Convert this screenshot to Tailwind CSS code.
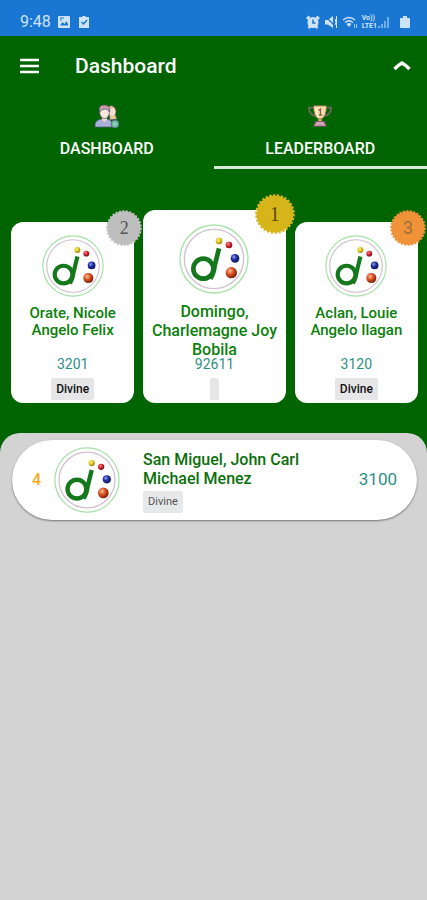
<!DOCTYPE html>
<html lang="en">
<head>
<meta charset="utf-8">
<meta name="viewport" content="width=device-width, initial-scale=1">
<title>Dashboard</title>
<script src="https://cdn.jsdelivr.net/npm/@tailwindcss/browser@4"></script>
</head>
<body class="flex min-h-screen flex-col bg-[#006400] font-['Roboto','Liberation_Sans',sans-serif]">
<svg class="absolute size-0" aria-hidden="true">
  <defs>
    <radialGradient id="gy" cx=".38" cy=".35" r=".7"><stop offset="0" stop-color="#fff27a"/><stop offset=".5" stop-color="#dcc51c"/><stop offset="1" stop-color="#8f7c10"/></radialGradient>
    <radialGradient id="gr" cx=".38" cy=".35" r=".7"><stop offset="0" stop-color="#ff8a8a"/><stop offset=".5" stop-color="#cf1f30"/><stop offset="1" stop-color="#7a0c18"/></radialGradient>
    <radialGradient id="gb" cx=".38" cy=".35" r=".7"><stop offset="0" stop-color="#98a4f0"/><stop offset=".45" stop-color="#1f2fa0"/><stop offset="1" stop-color="#0a1258"/></radialGradient>
    <radialGradient id="go" cx=".38" cy=".35" r=".7"><stop offset="0" stop-color="#ffc09a"/><stop offset=".45" stop-color="#d9501f"/><stop offset="1" stop-color="#6e1c08"/></radialGradient>
    <symbol id="logo" viewBox="0 0 210 210">
      <circle cx="105" cy="105" r="102" fill="#fff" stroke="#a6e2a6" stroke-width="4"/>
      <circle cx="105" cy="105" r="89" fill="none" stroke="#cdc2cd" stroke-width="4"/>
      <circle cx="73" cy="134" r="30" fill="none" stroke="#15781c" stroke-width="14"/>
      <path d="M120 73 107 126Q104 150 94 164" fill="none" stroke="#15781c" stroke-width="14"/>
      <circle cx="120" cy="51" r="10" fill="url(#gy)"/>
      <circle cx="150" cy="63" r="10" fill="url(#gr)"/>
      <circle cx="168" cy="103" r="13" fill="url(#gb)"/>
      <circle cx="157" cy="146" r="17" fill="url(#go)"/>
    </symbol>
    <symbol id="seal" viewBox="0 0 40 40">
      <circle cx="20" cy="20" r="18.500" fill="currentColor"/>
      <circle cx="20" cy="20" r="18.500" fill="none" stroke="currentColor" stroke-width="2.600" pathLength="60" stroke-dasharray="1.200 .8"/>
    </symbol>
  </defs>
</svg>

<div class="flex h-9 items-center justify-between bg-[#1976d2] pt-2 pr-4 pl-5 text-[#cfe4fb]">
  <div class="flex items-center gap-[6px]">
    <span class="text-base">9:48</span>
    <svg class="size-[14px]" viewBox="0 0 14 14"><rect x="1" y="1" width="12" height="12" rx="1" fill="currentColor"/><path d="M3 10.500 5.500 7l2 2L9.500 6l2 4.500z" fill="#1976d2"/><path d="M3 3h4M3 5h2" stroke="#1976d2"/></svg>
    <svg class="size-[14px]" viewBox="0 0 14 14"><path d="M2 2h3l1-1h2l1 1h3v11H2z" fill="currentColor"/><path d="m4.500 7 2 2 3.500-4" fill="none" stroke="#1976d2" stroke-width="1.500"/></svg>
  </div>
  <div class="flex items-center gap-1">
    <svg class="size-[14px]" viewBox="0 0 14 14"><circle cx="7" cy="7.500" r="5.500" fill="currentColor"/><path d="M1 4 3.500 1.500M13 4 10.500 1.500M2.500 13l1.500-1.500M11.500 13 10 11.500" stroke="currentColor" stroke-width="2.500"/><path d="M7 4.500V8h2.500" fill="none" stroke="#1976d2" stroke-width="1.500"/></svg>
    <svg class="size-[14px]" viewBox="0 0 14 14"><path d="M1 5h3l5-4v12L4 9.500H1z" fill="currentColor"/><path d="m1 1 12 12" stroke="#1976d2" stroke-width="1.200"/><path d="M11 4q2 3 0 6M12.500 1v12" fill="none" stroke="currentColor"/></svg>
    <svg class="h-[14px] w-4" viewBox="0 0 16 14"><path d="M1 5q6-5 12 0M3 7.500q4-3.500 8 0" fill="none" stroke="currentColor" stroke-width="1.500"/><path d="M4.500 9Q7 7 9.500 9L7 12z" fill="currentColor"/><path d="M12.500 9v4M14.500 9v4" stroke="currentColor" opacity=".7"/></svg>
    <span class="flex flex-col text-[7px] leading-[8px] font-bold"><span>Vo))</span><span>LTE1</span></span>
    <svg class="-ml-1 size-[14px]" viewBox="0 0 14 14"><path d="M2 11v2M5 9v4M8 6v7M11 2v11" stroke="currentColor" stroke-width="1.500" opacity=".65"/></svg>
    <svg class="ml-1 h-[14px] w-3" viewBox="0 0 12 14"><path d="M1 4q0-1 1-1h2V1h4v2h2q1 0 1 1v8q0 1-1 1H2q-1 0-1-1z" fill="currentColor"/></svg>
  </div>
</div>

<header class="flex h-[60px] items-center pr-4 pl-[19px] text-white">
  <button type="button" aria-label="Open menu"><svg class="h-4 w-[21px]" viewBox="0 0 21 16"><path d="M1 2h19M1 8h19M1 14h19" stroke="currentColor" stroke-width="2.500"/></svg></button>
  <h1 class="ml-[35px] flex-1 text-[21px] leading-7 font-medium">Dashboard</h1>
  <button type="button" aria-label="Collapse"><svg class="h-3 w-[18px]" viewBox="0 0 18 12"><path d="M1.500 9Q6 4.500 9 3q3 1.500 7.500 6" fill="none" stroke="currentColor" stroke-width="3.500"/></svg></button>
</header>

<nav class="grid h-[73px] grid-cols-2 text-base font-medium text-white">
  <a href="#dashboard" class="flex flex-col items-center gap-[9px] border-b-3 border-transparent pt-2">
    <svg class="size-6" viewBox="0 0 24 24" stroke="#565a82" stroke-width=".8"><path d="M13 3q4-3 7 1 2 3 0 6l2 5-7 1z" fill="#e8c98e"/><circle cx="17" cy="8" r="3.500" fill="#f6dccb" stroke="none"/><path d="M0 23q-1-7 7-8h5q6 1 6 8z" fill="#a9b0dc"/><path d="M7 12h5v4l-2.500 2L7 16z" fill="#f3d5c5" stroke="none"/><ellipse cx="9.500" cy="8.500" rx="4.800" ry="6" fill="#fbe6dc"/><path d="M4.500 8Q3 1 9 1q7 0 5.500 7-1-3-4-3-4 0-6 3z" fill="#cd9ba4"/><circle cx="20" cy="20" r="4" fill="#6abf9f"/><path d="M20 18v4M18 20h4" stroke="#a8dcc5"/></svg>
    <span>DASHBOARD</span>
  </a>
  <a href="#leaderboard" aria-current="page" class="flex flex-col items-center gap-[9px] border-b-3 border-[#d9e8d6] pt-2">
    <svg class="size-6" viewBox="0 0 26 24"><path d="M7 3H1q0 8 8 9M19 3h6q0 8-8 9" fill="none" stroke="#6a6a5c" stroke-width="2"/><path d="M6 1h14q0 11-5 14h-4Q6 12 6 1z" fill="#fbdca8" stroke="#7a6448" stroke-width=".8"/><path d="M9 3q0 7 3 10" stroke="#fff1d3" stroke-width="1.500" fill="none"/><path d="M11.500 15h3l1 4h-5z" fill="#d9a76c"/><path d="M8 18h10v2.500h1.500V23h-13v-2.500H8z" fill="#d5a0b5" stroke="#6d4d63" stroke-width=".8"/><path d="m11.500 6 2-1.500V11M11.500 11h4" fill="none" stroke="#805d50" stroke-width="1.400"/></svg>
    <span>LEADERBOARD</span>
  </a>
</nav>

<main class="flex flex-1 flex-col">
  <section aria-label="Top three" class="grid grid-cols-[123fr_142fr_123fr] items-end gap-[9px] pt-[41px] pr-[9px] pb-[30px] pl-[11px] text-center text-sm text-[#2f8f86]">
    <article class="relative flex h-[181px] flex-col items-center rounded-xl bg-white pt-[13px]">
      <div class="absolute -top-3 -right-2 flex size-9 items-center justify-center text-[#bebebe]"><svg class="absolute inset-0 size-full"><use href="#seal"/></svg><span class="relative font-['Liberation_Serif',serif] text-lg text-[#555]">2</span></div>
      <svg class="size-[62px]" role="img" aria-label="Logo"><use href="#logo"/></svg>
      <h2 class="mt-2 h-[49px] px-3 text-[15px] leading-[17px] font-medium text-[#0b800b]">Orate, Nicole Angelo Felix</h2>
      <p class="leading-5">3201</p>
      <p class="mt-1 rounded-xs bg-[#e6e6e8] px-[5px] text-xs leading-[22px] font-medium text-[#111]">Divine</p>
    </article>
    <article class="relative flex h-[193px] flex-col items-center rounded-xl bg-white pt-[14px]">
      <div class="absolute -top-4 -right-[9px] flex size-10 items-center justify-center text-[#d6b51a]"><svg class="absolute inset-0 size-full"><use href="#seal"/></svg><span class="relative font-['Liberation_Serif',serif] text-xl text-[#5a4a10]">1</span></div>
      <svg class="size-[70px]" role="img" aria-label="Logo"><use href="#logo"/></svg>
      <h2 class="mt-2 h-[54px] px-1 text-base leading-[19px] font-medium text-[#0b800b]">Domingo, Charlemagne Joy Bobila</h2>
      <p class="leading-4">92611</p>
      <p class="mt-[6px] rounded-xs bg-[#e6e6e8] px-[3px] text-xs leading-[22px]">&nbsp;</p>
    </article>
    <article class="relative flex h-[181px] flex-col items-center rounded-xl bg-white pt-[13px]">
      <div class="absolute -top-3 -right-2 flex size-9 items-center justify-center text-[#f09238]"><svg class="absolute inset-0 size-full"><use href="#seal"/></svg><span class="relative text-lg text-[#a0703c]">3</span></div>
      <svg class="size-[62px]" role="img" aria-label="Logo"><use href="#logo"/></svg>
      <h2 class="mt-2 h-[49px] px-3 text-[15px] leading-[17px] font-medium text-[#0b800b]">Aclan, Louie Angelo Ilagan</h2>
      <p class="leading-5">3120</p>
      <p class="mt-1 rounded-xs bg-[#e6e6e8] px-[5px] text-xs leading-[22px] font-medium text-[#111]">Divine</p>
    </article>
  </section>

  <section aria-label="Other ranks" class="flex-1 rounded-t-[20px] bg-[#d3d3d3] pt-[7px] pr-[10px] pl-3">
    <article class="flex h-20 items-center rounded-full bg-white pr-5 pl-5 shadow-[0_1px_2px_rgba(0,0,0,0.45)]">
      <span class="w-[22px] text-base font-medium text-[#f9a825]">4</span>
      <svg class="size-[66px]" role="img" aria-label="Logo"><use href="#logo"/></svg>
      <div class="ml-[23px] flex-1 pt-[2px]">
        <h2 class="max-w-[170px] text-base leading-[19px] font-medium text-[#0b700b]">San Miguel, John Carl Michael Menez</h2>
        <p class="mt-[3px] w-fit rounded-xs bg-[#e6e8ea] px-[5px] text-[11px] leading-[22px] text-[#555]">Divine</p>
      </div>
      <span class="text-[17px] text-[#2f8f86]">3100</span>
    </article>
  </section>
</main>
</body>
</html>
